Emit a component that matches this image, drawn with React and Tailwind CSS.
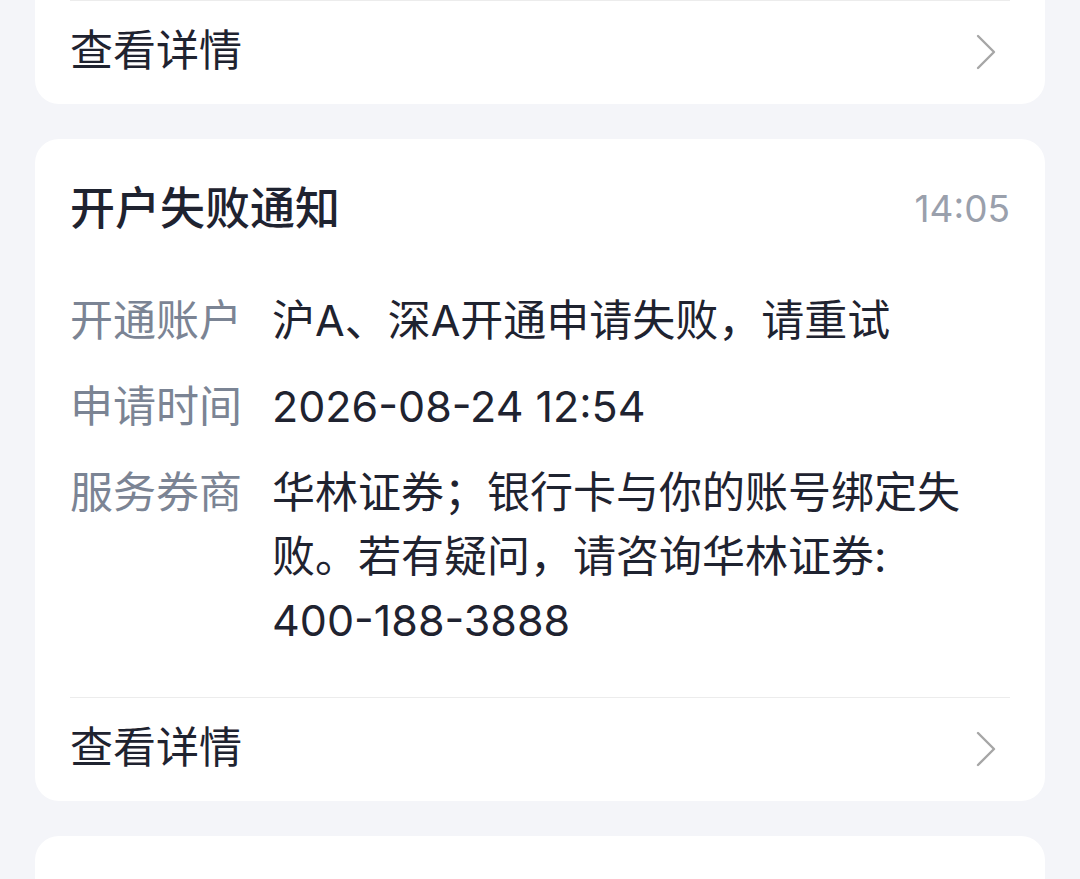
import React from 'react';

const FONT = { fontFamily: 'Inter, "Noto Sans CJK SC", sans-serif' };

// 右侧箭头
const Chevron = () => (
  <svg width="20" height="36" viewBox="0 0 20 36" fill="none">
    <polyline points="2,2 18,18 2,34" stroke="#a6a6a6" strokeWidth="2.4" strokeLinecap="round" strokeLinejoin="round" />
  </svg>
);

const DetailRow = () => (
  <div className="flex items-center justify-between h-[103px] pb-[4px]">
    <span className="text-[43px] leading-none text-[#1f2330]">查看详情</span>
    <div className="pr-[14px] pt-[2px]">
      <Chevron />
    </div>
  </div>
);

const InfoRow = ({ label, children }) => (
  <div className="flex">
    <div className="w-[202px] shrink-0 text-[43px] leading-[64px] text-[#7b8494]">{label}</div>
    <div className="w-[700px] text-[43px] leading-[64px] text-[#1f2330]">{children}</div>
  </div>
);

export default function App() {
  return (
    <div className="bg-[#f4f5f9] px-[35px] flex flex-col gap-[35px] overflow-hidden h-[879px]" style={FONT}>
      {/* 上一张卡片底部 */}
      <div className="bg-white rounded-b-[24px] px-[35px]">
        <div className="h-px bg-[#ececec]" />
        <DetailRow />
      </div>

      {/* 开户失败通知 */}
      <div className="bg-white rounded-[24px] px-[35px] pt-[41px] shrink-0">
        <div className="flex items-center justify-between h-[56px]">
          <span className="text-[45px] leading-none font-medium text-[#1f2330]">开户失败通知</span>
          <span className="text-[37px] leading-none text-[#9aa0ac]">14:05</span>
        </div>
        <div className="mt-[52px] flex flex-col gap-[22px]">
          <InfoRow label="开通账户">沪A、深A开通申请失败，请重试</InfoRow>
          <InfoRow label="申请时间">2026-08-24 12:54</InfoRow>
          <InfoRow label="服务券商">
            华林证券；银行卡与你的账号绑定失败。若有疑问，请咨询华林证券:
            <span className="inline-block">400-188-3888</span>
          </InfoRow>
        </div>
        <div className="mt-[45px] h-px bg-[#ececec]" />
        <DetailRow />
      </div>

      {/* 下一张卡片顶部 */}
      <div className="bg-white rounded-t-[24px] h-[200px] shrink-0" />
    </div>
  );
}
